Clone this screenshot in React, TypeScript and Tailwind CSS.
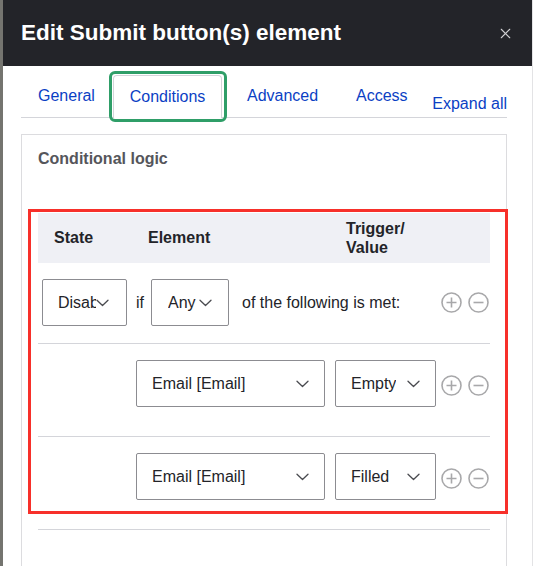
import { X } from 'lucide-react';

interface SelectBoxProps {
  label: string;
  className: string;
  clip?: string;
}

function Chevron() {
  return (
    <svg width="13" height="8" viewBox="0 0 13 8" className="shrink-0" fill="none">
      <polyline points="1,1.2 6.5,6.5 12,1.2" stroke="#4a4b50" strokeWidth="1.3" strokeLinecap="round" strokeLinejoin="round" />
    </svg>
  );
}

function SelectBox({ label, className, clip }: SelectBoxProps) {
  return (
    <div
      className={`flex h-[47px] shrink-0 items-center rounded-[2px] border border-[#8c8c91] bg-white pl-[15px] text-[16px] text-[#232429] ${className}`}
    >
      <span className={`overflow-hidden whitespace-nowrap ${clip ?? ''}`}>{label}</span>
      <span className={clip ? '' : 'ml-auto'}>
        <Chevron />
      </span>
    </div>
  );
}

function CircleButtons() {
  return (
    <div className="flex items-center gap-[6px]">
      <svg width="21" height="21" viewBox="0 0 21 21" fill="none">
        <circle cx="10.5" cy="10.5" r="9.5" stroke="#a8a8aa" strokeWidth="1.6" />
        <path d="M10.5 5.5v10M5.5 10.5h10" stroke="#a8a8aa" strokeWidth="1.6" />
      </svg>
      <svg width="21" height="21" viewBox="0 0 21 21" fill="none">
        <circle cx="10.5" cy="10.5" r="9.5" stroke="#a8a8aa" strokeWidth="1.6" />
        <path d="M5.5 10.5h10" stroke="#a8a8aa" strokeWidth="1.6" />
      </svg>
    </div>
  );
}

export default function App() {
  return (
    <div className="flex h-[566px] w-[533px] overflow-hidden bg-white font-['Liberation_Sans',Arial,sans-serif]">
      <div className="w-[3px] shrink-0 bg-[#74746f]" />

      <div className="flex min-w-0 flex-1 flex-col">
        {/* Header */}
        <div className="flex h-[66px] shrink-0 items-center justify-between bg-[#232429] pl-[18px] pr-[18px]">
          <h2 className="text-[22.5px] font-bold text-white">Edit Submit button(s) element</h2>
          <X className="h-[17px] w-[17px] text-[#d0d0d3]" strokeWidth={1.5} />
        </div>

        {/* Tabs */}
        <div className="relative ml-[18px] mr-[25px] mt-[9px] flex h-[43px] items-end border-b border-[#d4d5da] text-[16px] text-[#0b3fc4]">
          <div className="flex h-[42px] w-[92px] items-center self-start pl-[17px]">General</div>
          <div className="-mb-px flex h-[43px] w-[109px] items-center justify-center rounded-t-[4px] border border-b-0 border-[#d4d5da] bg-white">
            Conditions
          </div>
          <div className="flex h-[42px] w-[109px] items-center self-start pl-[25px]">Advanced</div>
          <div className="flex h-[42px] w-[95px] items-center self-start pl-[25px]">Access</div>
          <div className="ml-auto pb-px leading-6">Expand all</div>

          <div className="pointer-events-none absolute left-[88px] top-[-4px] h-[51px] w-[118px] rounded-[6px] border-[3px] border-[#2f9e68]" />
        </div>

        {/* Card */}
        <div className="relative ml-[18px] mr-[25px] mt-[16px] flex-1 border border-b-0 border-[#dcdcdf] px-[16px] pt-[12px]">
          <h3 className="text-[16px] font-bold leading-6 text-[#55565b]">Conditional logic</h3>

          <div className="mt-[42px] text-[16px] text-[#232429]">
            {/* Table header */}
            <div className="flex h-[50px] items-center bg-[#eff0f5] font-bold">
              <div className="w-[94px] pl-[16px]">State</div>
              <div className="w-[199px] pl-[16px]">Element</div>
              <div className="pl-[15px] leading-[19px]">
                Trigger/
                <br />
                Value
              </div>
            </div>

            {/* Row 1 */}
            <div className="flex items-center border-b border-[#d4d5da] pb-[17px] pl-[4px] pr-px pt-[16px]">
              <SelectBox label="Disabled" className="w-[85px]" clip="w-[38px]" />
              <span className="ml-[9px]">if</span>
              <SelectBox label="Any" className="ml-[7px] w-[78px] pl-[16px] pr-[16px]" />
              <span className="ml-[13px]">of the following is met:</span>
              <div className="ml-auto">
                <CircleButtons />
              </div>
            </div>

            {/* Row 2 */}
            <div className="flex items-start border-b border-[#d4d5da] pb-[29px] pl-[98px] pr-px pt-[16px]">
              <SelectBox label="Email [Email]" className="w-[189px] pr-[15px]" />
              <SelectBox label="Empty" className="ml-[10px] w-[101px] pr-[15px]" />
              <div className="ml-auto mt-[15px]">
                <CircleButtons />
              </div>
            </div>

            {/* Row 3 */}
            <div className="flex items-start border-b border-[#d4d5da] pb-[29px] pl-[98px] pr-px pt-[16px]">
              <SelectBox label="Email [Email]" className="w-[189px] pr-[15px]" />
              <SelectBox label="Filled" className="ml-[10px] w-[101px] pr-[15px]" />
              <div className="ml-auto mt-[15px]">
                <CircleButtons />
              </div>
            </div>
          </div>

          <div className="pointer-events-none absolute left-[6px] top-[74px] h-[305px] w-[480px] border-[3px] border-[#f7302a]" />
        </div>
      </div>

      <div className="w-px shrink-0 bg-[#e3e3e5]" />
    </div>
  );
}
